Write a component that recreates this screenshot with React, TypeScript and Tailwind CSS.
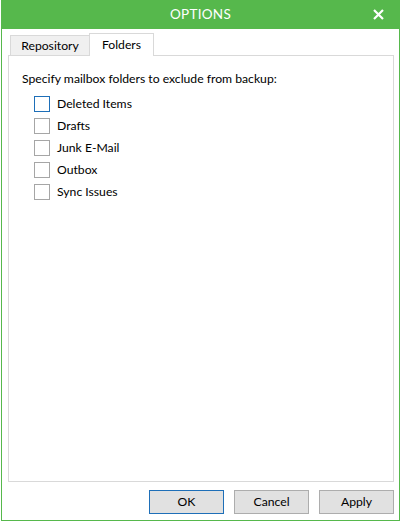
import React from 'react';

const folders = ['Deleted Items', 'Drafts', 'Junk E-Mail', 'Outbox', 'Sync Issues'];

function CheckRow({ label, focused }: { label: string; focused?: boolean }) {
  return (
    <label className="flex items-center h-[22px] gap-[7px]">
      <span
        className={
          'w-[16px] h-[16px] border bg-white ' + (focused ? 'border-[#1e6fb8]' : 'border-[#a6a6a6]')
        }
      />
      <span className="pt-px">{label}</span>
    </label>
  );
}

function DialogButton({ label, primary }: { label: string; primary?: boolean }) {
  return (
    <button
      className={
        'w-[75px] h-[24px] bg-[#e1e1e1] border text-black pt-px ' +
        (primary ? 'border-[#1e6fb8]' : 'border-[#adadad]')
      }
    >
      {label}
    </button>
  );
}

export default function App() {
  return (
    <div
      className="w-[401px] h-[522px] bg-white text-[12.2px] text-black"
      style={{ fontFamily: '"Segoe UI", Lato, "Noto Sans", sans-serif' }}
    >
      <div className="ml-px w-[399px] h-[521px] bg-[#56b84c] px-px pb-px flex flex-col">
        <div className="h-[29px] shrink-0 flex items-center relative text-white">
          <div className="flex-1 text-center text-[13.5px] tracking-[0.3px]">OPTIONS</div>
          <svg className="absolute right-[15px] top-[9px]" width="11" height="11" viewBox="0 0 11 11">
            <path d="M1 1L10 10M10 1L1 10" stroke="white" strokeWidth="2.2" />
          </svg>
        </div>
        <div className="flex-1 bg-white flex flex-col pl-[6px] pr-[5px] pt-[4px] pb-[6px]">
          <div className="flex items-end pl-[2px] h-[22px] relative z-10">
            <div className="w-[79px] h-[20px] bg-[#f0f0f0] border border-b-0 border-r-0 border-[#d9d9d9] flex items-center justify-center pt-[2px]">
              Repository
            </div>
            <div className="w-[65px] h-[23px] bg-white border border-b-0 border-[#d9d9d9] flex items-center justify-center -mb-px pt-px">
              Folders
            </div>
          </div>
          <div className="h-[427px] border border-[#d9d9d9] pt-[15px] pl-[13px]">
            <div className="leading-[16px]">Specify mailbox folders to exclude from backup:</div>
            <div className="pl-[12px] pt-[6px]">
              {folders.map((f, i) => (
                <CheckRow key={f} label={f} focused={i === 0} />
              ))}
            </div>
          </div>
          <div className="flex-1 flex items-end justify-end gap-[10px]">
            <DialogButton label="OK" primary />
            <DialogButton label="Cancel" />
            <DialogButton label="Apply" />
          </div>
        </div>
      </div>
    </div>
  );
}
